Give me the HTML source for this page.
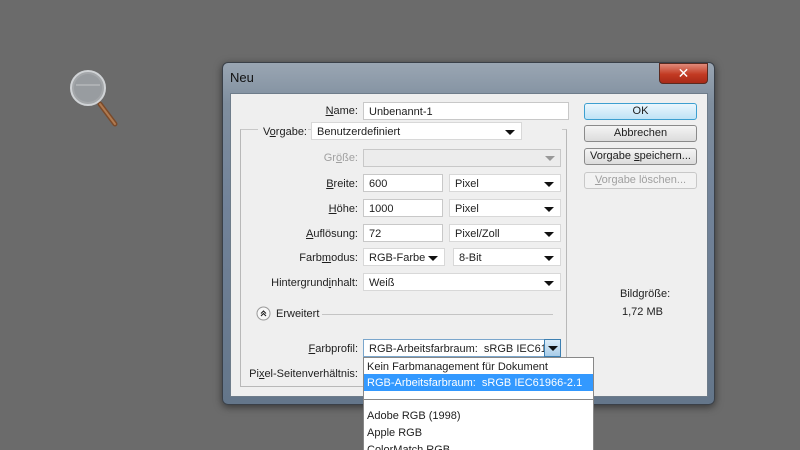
<!DOCTYPE html>
<html><head><meta charset="utf-8"><style>
*{box-sizing:border-box;margin:0;padding:0}
html,body{width:800px;height:450px;overflow:hidden}
body{background:#6b6b6b;position:relative;font-family:"Liberation Sans","DejaVu Sans",sans-serif;font-size:11px;color:#1e1e1e}
.a{position:absolute;white-space:nowrap}
.win{left:222px;top:62px;width:493px;height:343px;border-radius:6px;background:linear-gradient(180deg,#9aa6b3 0%,#7f8e9e 12%,#72839a 40%,#64768a 100%);border:1px solid #3a4048;box-shadow:0 2px 8px rgba(0,0,0,.5)}
.client{left:230px;top:93px;width:478px;height:304px;background:#efefef;border:1px solid #6e7c8a}
.lbl{text-align:right}
.in{background:#fff;border:1px solid #c8c8c8;padding:3px 5px;height:18px;line-height:13px}
.sel{background:#fff;border:1px solid #d8d8d8;padding:3px 5px;height:18px;line-height:13px}
.sel:after{content:"";position:absolute;right:6px;top:7px;border-left:5px solid transparent;border-right:5px solid transparent;border-top:5px solid #111}
.btn{border:1px solid #8a8a8a;border-radius:3px;background:linear-gradient(#f4f4f4,#dcdcdc);text-align:center;height:17px;line-height:15px;font-size:11px}
u{text-decoration:underline}
</style></head><body>
<svg class="a" style="left:64px;top:66px" width="60" height="64"><line x1="36" y1="38" x2="51" y2="58" stroke="#7a4a2a" stroke-width="5" stroke-linecap="round"/><line x1="36" y1="38" x2="51" y2="58" stroke="#b07a50" stroke-width="2" stroke-linecap="round"/><circle cx="24" cy="22" r="17" fill="#a4a7aa" stroke="#d0d3d6" stroke-width="2"/><circle cx="24" cy="22" r="14" fill="#989ca0"/><line x1="12" y1="19" x2="36" y2="19" stroke="#c4c6c8" stroke-width="1"/></svg>
<div class="a win"></div>
<div class="a" style="left:230px;top:70px;font-size:13px;color:#111">Neu</div>
<div class="a" style="left:659px;top:63px;width:49px;height:21px;border-radius:0 0 4px 4px;background:linear-gradient(#e08a7a,#c23a22 55%,#a82a18);border:1px solid #5a2a20;color:#fff;text-align:center;font-weight:bold;font-size:14px;line-height:19px">✕</div>
<div class="a client"></div>
<div class="a" style="left:240px;top:129px;width:327px;height:258px;border:1px solid #b8b8b8;border-top-color:#c8c8c8"></div>
<div class="a" style="left:258px;top:124px;width:50px;height:10px;background:#efefef"></div>
<div class="a" style="left:522px;top:124px;width:40px;height:10px;background:#efefef"></div>

<div class="a lbl" style="right:442px;top:105px"><u>N</u>ame:</div>
<div class="a in" style="left:363px;top:102px;width:206px">Unbenannt-1</div>
<div class="a lbl" style="right:493px;top:126px">V<u>o</u>rgabe:</div>
<div class="a sel" style="left:311px;top:122px;width:211px">Benutzerdefiniert</div>
<div class="a lbl" style="right:442px;top:152px;color:#a0a0a0">Gr<u>ö</u>ße:</div>
<div class="a" style="left:363px;top:149px;width:198px;height:18px;background:#ececec;border:1px solid #c8c8c8"></div>
<div class="a" style="left:545px;top:156px;border-left:5px solid transparent;border-right:5px solid transparent;border-top:5px solid #999"></div>

<div class="a lbl" style="right:442px;top:178px"><u>B</u>reite:</div>
<div class="a in" style="left:363px;top:174px;width:80px">600</div>
<div class="a sel" style="left:449px;top:174px;width:112px">Pixel</div>
<div class="a lbl" style="right:442px;top:203px"><u>H</u>öhe:</div>
<div class="a in" style="left:363px;top:199px;width:80px">1000</div>
<div class="a sel" style="left:449px;top:199px;width:112px">Pixel</div>
<div class="a lbl" style="right:442px;top:228px"><u>A</u>uflösung:</div>
<div class="a in" style="left:363px;top:224px;width:80px">72</div>
<div class="a sel" style="left:449px;top:224px;width:112px">Pixel/Zoll</div>
<div class="a lbl" style="right:442px;top:252px">Farb<u>m</u>odus:</div>
<div class="a sel" style="left:363px;top:248px;width:82px">RGB-Farbe</div>
<div class="a sel" style="left:453px;top:248px;width:108px">8-Bit</div>
<div class="a lbl" style="right:442px;top:277px">Hintergrund<u>i</u>nhalt:</div>
<div class="a sel" style="left:363px;top:273px;width:198px">Weiß</div>

<svg class="a" style="left:256px;top:306px" width="15" height="15"><circle cx="7.5" cy="7.5" r="6.5" fill="#f8f8f8" stroke="#999"/><path d="M5 7.5l2.5-2.5 2.5 2.5M5 10l2.5-2.5 2.5 2.5" fill="none" stroke="#222" stroke-width="1.1"/></svg>
<div class="a" style="left:276px;top:308px">Erweitert</div>
<div class="a" style="left:322px;top:314px;width:231px;height:1px;background:#c4c4c4"></div>

<div class="a lbl" style="right:442px;top:343px"><u>F</u>arbprofil:</div>
<div class="a" style="left:363px;top:339px;width:182px;height:18px;background:#fff;border:1px solid #7aa6cc;border-right:none;padding:3px 5px;line-height:13px;overflow:hidden">RGB-Arbeitsfarbraum:&nbsp; sRGB IEC619...</div>
<div class="a" style="left:544px;top:339px;width:17px;height:18px;background:linear-gradient(#dcecf8,#a8cce8);border:1px solid #3c7fb1"></div>
<div class="a" style="left:548px;top:346px;border-left:5px solid transparent;border-right:5px solid transparent;border-top:5px solid #111"></div>
<div class="a lbl" style="right:442px;top:368px">Pi<u>x</u>el-Seitenverhältnis:</div>

<div class="a" style="left:363px;top:357px;width:231px;height:100px;background:#fff;border:1px solid #888"></div>
<div class="a" style="left:367px;top:361px">Kein Farbmanagement für Dokument</div>
<div class="a" style="left:364px;top:374px;width:229px;height:17px;background:#3399ff"></div>
<div class="a" style="left:367px;top:377px;color:#fff">RGB-Arbeitsfarbraum:&nbsp; sRGB IEC61966-2.1</div>
<div class="a" style="left:364px;top:399px;width:229px;height:1px;background:#888"></div>
<div class="a" style="left:367px;top:410px">Adobe RGB (1998)</div>
<div class="a" style="left:367px;top:427px">Apple RGB</div>
<div class="a" style="left:367px;top:444px">ColorMatch RGB</div>

<div class="a btn" style="left:584px;top:103px;width:113px;border-color:#3c9fd0;background:linear-gradient(#eaf6fd,#bfe3f6)">OK</div>
<div class="a btn" style="left:584px;top:125px;width:113px">Abbrechen</div>
<div class="a btn" style="left:584px;top:148px;width:113px">Vorgabe <u>s</u>peichern...</div>
<div class="a btn" style="left:584px;top:172px;width:113px;color:#a0a0a0;border-color:#c8c8c8;background:#f2f2f2"><u>V</u>orgabe löschen...</div>
<div class="a" style="left:620px;top:288px">Bildgröße:</div>
<div class="a" style="left:622px;top:306px">1,72 MB</div>
</body></html>
